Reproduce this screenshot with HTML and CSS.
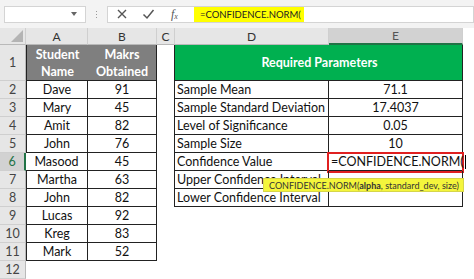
FILE: index.html
```html
<!DOCTYPE html>
<html lang="en">
<head>
    <meta charset="UTF-8">
    <title>Confidence Interval</title>
    <link rel="stylesheet" href="styles.css">
</head>
<body>
    <div class="formula-bar">
        <div class="name-box"><span class="caret"></span></div>
        <div class="grip"><i></i><i></i><i></i></div>
        <div class="fx-box">
            <svg width="12" height="12" viewBox="0 0 12 12"><path d="M2 2 L10 10 M10 2 L2 10" stroke="#555" stroke-width="1.4" fill="none"/></svg>
            <svg width="13" height="12" viewBox="0 0 13 12"><path d="M1.5 6.5 L5 10 L11.5 2" stroke="#555" stroke-width="1.5" fill="none"/></svg>
            <span class="fx">f<sub>x</sub></span>
        </div>
        <div class="formula"><span class="formula-text">=CONFIDENCE.NORM(</span></div>
    </div>

    <div class="sheet">
        <!-- column headers -->
        <div class="ch corner"><span class="tri"></span></div>
        <div class="ch">A</div>
        <div class="ch">B</div>
        <div class="ch">C</div>
        <div class="ch">D</div>
        <div class="ch sel">E</div>
        <div class="ch blank"></div>

        <!-- row 1 -->
        <div class="rh">1</div>
        <div class="c hd bl bb">Student<br>Name</div>
        <div class="c hd bb br">Makrs<br>Obtained</div>
        <div class="c br"></div>
        <div class="c green br bb">Required Parameters</div>
        <div class="c"></div>

        <!-- row 2 -->
        <div class="rh">2</div>
        <div class="c mid bl bb br">Dave</div>
        <div class="c mid bb br">91</div>
        <div class="c br"></div>
        <div class="c bb br">Sample Mean</div>
        <div class="c mid bb br">71.1</div>
        <div class="c"></div>

        <!-- row 3 -->
        <div class="rh">3</div>
        <div class="c mid bl bb br">Mary</div>
        <div class="c mid bb br">45</div>
        <div class="c br"></div>
        <div class="c bb br">Sample Standard Deviation</div>
        <div class="c mid bb br">17.4037</div>
        <div class="c"></div>

        <!-- row 4 -->
        <div class="rh">4</div>
        <div class="c mid bl bb br">Amit</div>
        <div class="c mid bb br">82</div>
        <div class="c br"></div>
        <div class="c bb br">Level of Significance</div>
        <div class="c mid bb br">0.05</div>
        <div class="c"></div>

        <!-- row 5 -->
        <div class="rh">5</div>
        <div class="c mid bl bb br">John</div>
        <div class="c mid bb br">76</div>
        <div class="c br"></div>
        <div class="c bb br">Sample Size</div>
        <div class="c mid bb br">10</div>
        <div class="c"></div>

        <!-- row 6 -->
        <div class="rh sel">6</div>
        <div class="c mid bb br">Masood</div>
        <div class="c mid bb br">45</div>
        <div class="c br"></div>
        <div class="c bb br">Confidence Value</div>
        <div class="c bb br active">
            <span class="entry">=CONFIDENCE.NORM(<span class="cursor"></span></span>
            <div class="tooltip">CONFIDENCE.NORM(<b>alpha</b>, standard_dev, size)</div>
        </div>
        <div class="c"></div>

        <!-- row 7 -->
        <div class="rh">7</div>
        <div class="c mid bl bb br">Martha</div>
        <div class="c mid bb br">63</div>
        <div class="c br"></div>
        <div class="c bb br">Upper Confidence Interval</div>
        <div class="c bb br"></div>
        <div class="c"></div>

        <!-- row 8 -->
        <div class="rh">8</div>
        <div class="c mid bl bb br">John</div>
        <div class="c mid bb br">82</div>
        <div class="c br"></div>
        <div class="c bb br">Lower Confidence Interval</div>
        <div class="c bb br"></div>
        <div class="c"></div>

        <!-- row 9 -->
        <div class="rh">9</div>
        <div class="c mid bl bb br">Lucas</div>
        <div class="c mid bb br">92</div>
        <div class="c"></div>
        <div class="c"></div>
        <div class="c"></div>
        <div class="c"></div>

        <!-- row 10 -->
        <div class="rh">10</div>
        <div class="c mid bl bb br">Kreg</div>
        <div class="c mid bb br">83</div>
        <div class="c"></div>
        <div class="c"></div>
        <div class="c"></div>
        <div class="c"></div>

        <!-- row 11 -->
        <div class="rh">11</div>
        <div class="c mid bl bb br">Mark</div>
        <div class="c mid bb br">52</div>
        <div class="c"></div>
        <div class="c"></div>
        <div class="c"></div>
        <div class="c"></div>

        <!-- row 12 -->
        <div class="rh">12</div>
        <div class="c"></div>
        <div class="c"></div>
        <div class="c"></div>
        <div class="c"></div>
        <div class="c"></div>
        <div class="c"></div>
    </div>
</body>
</html>
```

FILE: styles.css
```css
* { box-sizing: border-box; }
body { margin: 0; background: #fff; font-family: Lato, "Liberation Sans", sans-serif; overflow: hidden; }

/* formula bar */
.formula-bar { display: flex; align-items: center; height: 28px; background: #f3f3f3; padding-left: 4px; }
.name-box { width: 82px; height: 17px; background: #fff; border: 1px solid #d4d4d4; display: flex; align-items: center; justify-content: flex-end; padding-right: 8px; }
.caret { width: 0; height: 0; border-left: 3px solid transparent; border-right: 3px solid transparent; border-top: 4px solid #666; }
.grip { width: 21px; display: flex; flex-direction: column; align-items: center; gap: 2px; }
.grip i { width: 1px; height: 1px; background: #999; }
.fx-box { width: 87px; height: 17px; background: #fff; border: 1px solid #d4d4d4; border-right: none; display: flex; align-items: center; gap: 14px; padding-left: 8px; }
.fx-box svg + svg { margin-left: 0; }
.fx { font-family: "Liberation Serif", serif; font-style: italic; font-size: 12px; color: #555; line-height: 1; margin-left: 2px; }
.fx sub { font-size: 8px; vertical-align: -1px; }
.formula { flex: 1; height: 17px; background: #fff; border: 1px solid #d4d4d4; border-left: none; display: flex; align-items: stretch; }
.formula-text { background: #ffff00; font-size: 9.5px; color: #222; padding: 0 6px; display: flex; align-items: center; width: 110px; }

/* grid */
.sheet { display: grid; grid-template-columns: 26px 62px 69px 18px 154px 134px 1fr; grid-template-rows: 17px 36px repeat(11, 18px); font-size: 12.5px; color: #111; }
.ch { background: #e6e6e6; border-right: 1px solid #cfcfcf; border-bottom: 1px solid #b9b9b9; display: flex; align-items: center; justify-content: center; font-size: 12px; color: #333; }
.ch.sel { background: #d2d2d2; border-bottom: 2px solid #217346; color: #555; }
.ch.blank { background: #fff; border: none; }
.corner { justify-content: flex-end; align-items: flex-end; padding: 0 2px 2px 0; }
.tri { width: 0; height: 0; border-left: 12px solid transparent; border-bottom: 12px solid #b4b4b4; }
.rh { background: #e6e6e6; border-bottom: 1px solid #cfcfcf; border-right: 1px solid #b9b9b9; display: flex; align-items: center; justify-content: center; font-size: 12.5px; color: #444; }
.rh.sel { background: #d2d2d2; color: #217346; border-right: 2px solid #217346; }

.c { display: flex; align-items: center; padding-left: 2px; white-space: nowrap; position: relative; }
.mid { justify-content: center; padding-left: 0; }
.bl { border-left: 1px solid #222; }
.br { border-right: 1px solid #222; }
.bb { border-bottom: 1px solid #222; }

.hd { background: #7f7f7f; color: #fff; font-weight: bold; justify-content: center; text-align: center; line-height: 17px; padding: 0; border-right-color: #c4c4c4; }
.hd.br { border-right-color: #222; }
.green { grid-column: span 2; background: #00b050; color: #fff; font-weight: bold; justify-content: center; }

/* active cell with annotation */
.active::after { content: ""; position: absolute; left: -2px; top: -1px; right: -2px; bottom: -3px; border: 2px solid #e02020; }
.entry { position: relative; z-index: 1; }
.cursor { display: inline-block; width: 1px; height: 14px; background: #000; vertical-align: -3px; margin-left: 1px; }
.tooltip { position: absolute; left: -66px; top: 25px; width: 201px; height: 14px; background: #f4f53c; border: 1px solid #d6d64a; font-size: 9px; color: #333; padding-left: 5px; display: flex; align-items: center; z-index: 2; }
```
